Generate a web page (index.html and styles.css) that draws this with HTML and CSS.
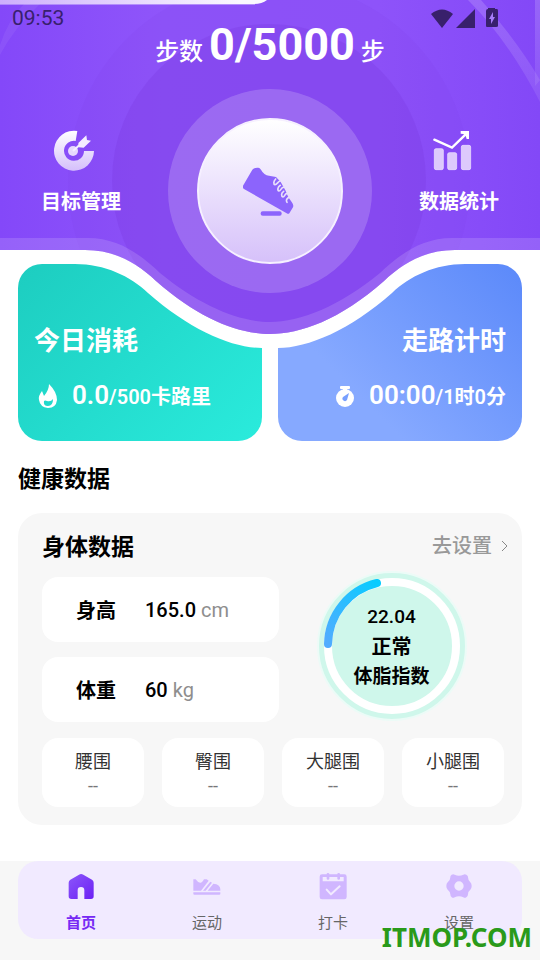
FILE: index.html
```html
<!DOCTYPE html>
<html lang="zh-CN">
<head>
<meta charset="utf-8">
<meta name="viewport" content="width=device-width, initial-scale=1">
<title>计步首页</title>
<link rel="stylesheet" href="styles.css">
</head>
<body>
<div class="app">
  <svg class="hero-art" viewBox="0 0 540 352" preserveAspectRatio="xMidYMin slice" aria-hidden="true">
    <defs>
      <linearGradient id="sky" x1="0" y1="0" x2="1" y2="0">
        <stop offset="0" stop-color="#8448f9"/><stop offset=".3" stop-color="#8f55fa"/>
        <stop offset=".7" stop-color="#8e53fa"/><stop offset="1" stop-color="#8348f7"/>
      </linearGradient>
      <linearGradient id="strip" x1="0" y1="0" x2="1" y2="0">
        <stop offset="0" stop-color="#ccaefc"/><stop offset=".9" stop-color="#fbf8ff"/>
      </linearGradient>
      <linearGradient id="ray" x1="0" y1="0" x2="0" y2="1">
        <stop offset="0" stop-color="#fff" stop-opacity=".16"/><stop offset="1" stop-color="#fff" stop-opacity=".08"/>
      </linearGradient>
      <clipPath id="body"><path d="M0 0H540V250H455C425 250 403 263 384 281C340 320 300 334 270 334S200 320 156 281C137 263 115 250 85 250H0Z"/></clipPath>
    </defs>
    <path fill="#fff" d="M0 240H540V264H465C435 264 410 276 392 293C350 330 308 348 278 348H262C232 348 190 330 148 293C130 276 105 264 75 264H0Z"/>
    <g clip-path="url(#body)">
      <rect width="540" height="340" fill="url(#sky)"/>
      <circle cx="269" cy="181" r="201" fill="#7d3fe8" fill-opacity=".14"/>
      <circle cx="269" cy="181" r="157" fill="#7c3de2" fill-opacity=".36"/>
      <path fill="url(#ray)" d="M468 0H481Q518 42 540 80V102Q508 40 468 0Z"/>
      <path fill="url(#ray)" d="M535 0H540V80L535 86Z"/>
      <path fill="#fff" fill-opacity=".06" d="M24 4H40Q14 28 0 55V45Q8 20 24 4Z"/>
      <path fill="#fff" fill-opacity=".14" d="M0 238H88C118 238 140 254 160 273C200 306 240 322 270 322S340 306 380 273C400 254 422 238 452 238H540V340H0Z"/>
    </g>
    <path fill="url(#strip)" d="M0 0H267Q262 4 254 4H0Z"/>
    <path fill="#fff" fill-opacity=".35" d="M0 4H255V5H0Z"/>
  </svg>

  <header class="hero">
    <div class="status">
      <time>09:53</time>
      <svg class="status-icons" viewBox="0 0 70 22" aria-hidden="true">
        <path d="M12 21L1 7Q12-2 23 7Z"/><path d="M26 21L45 2V21Z"/>
        <path d="M58 1H65V2H67Q68 2 68 4V19Q68 20 66 20H57Q56 20 56 19V4Q56 2 58 2Z"/>
        <path class="bolt" d="M63 5L59 12H61V17L65 10H63Z"/>
      </svg>
    </div>
    <h1 class="steps">步数 <b>0/5000</b> 步</h1>
    <div class="dial-row">
      <a class="shortcut" href="#goals">
        <svg viewBox="162 60 126 126" aria-hidden="true">
          <defs><linearGradient id="lilac" x1="0" y1="0" x2="0" y2="1"><stop offset="0" stop-color="#fff"/><stop offset="1" stop-color="#d5bffb"/></linearGradient></defs>
          <path fill="url(#lilac)" d="M235 63A60 60 0 1 0 285 123H255A30 30 0 1 1 230 93Z"/>
          <circle cx="222" cy="123" r="15" fill="#e6d8fd"/>
          <path d="M222 123L248 99" stroke="#f4edff" stroke-width="6"/>
          <path fill="#f4edff" d="M238 99L262 76L264 90L276 92L254 113L239 112Z"/>
        </svg>
        <span>目标管理</span>
      </a>
      <button class="dial" type="button" aria-label="开始步行">
        <svg viewBox="157 160 165 165" aria-hidden="true">
          <path fill="#8c64fc" d="M185 177Q190 170 203 171Q207 171 211 177Q220 194 235 195L256 199L270 214L284 239L293 260L303 274Q310 283 307 290L296 308Q293 311 288 308L160 235Q154 231 157 225Z"/>
          <path fill="none" stroke="#eae0fb" stroke-width="5" stroke-linecap="round" stroke-linejoin="round" d="M255 205C248 212 248 221 253 222C259 222 262 212 268 211M269 224C260 229 260 240 265 241C270 241 273 229 278 230M279 242C270 248 272 258 277 259C282 259 283 247 289 249M293 261L288 266Q286 271 289 275"/>
          <rect x="210" y="302" width="63" height="13" rx="6" fill="#8c64fc"/>
        </svg>
      </button>
      <a class="shortcut" href="#stats">
        <svg viewBox="480 60 126 126" aria-hidden="true">
          <g fill="#ddc9fc" stroke="#f1e8ff" stroke-width="2"><rect x="490" y="116" width="27" height="63" rx="5"/><rect x="530" y="128" width="27" height="51" rx="5"/><rect x="571" y="106" width="28" height="73" rx="5"/></g>
          <path fill="none" stroke="#fff" stroke-width="7" stroke-linecap="round" d="M490 89L543 113L584 73"/>
          <path fill="#fff" d="M569 63H594V87H587L584 77L577 72L569 71Z"/>
        </svg>
        <span>数据统计</span>
      </a>
    </div>
  </header>

  <main>
    <section class="cards">
      <a class="card burn" href="#burn">
        <h2>今日消耗</h2>
        <p>
          <svg viewBox="0 0 28 28" aria-hidden="true"><path fill="#fff" fill-rule="evenodd" d="M15 2Q23 10 23 18Q22 26 14 26Q6 25 5 18Q4 14 8 9L10 14Q15 8 15 2ZM10 19Q9 24 14 24Q19 24 19 17Q17 20 13 19Q11 18 10 19Z"/></svg>
          <span><b>0.0</b>/500卡路里</span>
        </p>
      </a>
      <a class="card timer" href="#timer">
        <h2>走路计时</h2>
        <p>
          <svg viewBox="0 0 28 28" aria-hidden="true"><rect x="9" y="4" width="10" height="3" rx="1" fill="#fff"/><path fill="#fff" d="M12 6H16V9H12Z"/><circle cx="14" cy="16" r="9" fill="#fff"/><path d="M18 11L16 18A2 2 0 0 1 12 15Z" fill="#779fff"/></svg>
          <span><b>00:00</b>/1时0分</span>
        </p>
      </a>
    </section>

    <h2 class="section-title">健康数据</h2>
    <section class="panel">
      <div class="panel-head">
        <h3>身体数据</h3>
        <a href="#body">去设置<svg viewBox="0 0 8 14" aria-hidden="true"><path d="M2 2L7 7L2 12"/></svg></a>
      </div>
      <div class="panel-body">
        <dl class="measures">
          <div><dt>身高</dt><dd>165.0 <small>cm</small></dd></div>
          <div><dt>体重</dt><dd>60 <small>kg</small></dd></div>
        </dl>
        <div class="gauge">
          <svg viewBox="0 0 150 150" aria-hidden="true">
            <defs><linearGradient id="arc" x1="0" y1="1" x2="1" y2="0"><stop offset="0" stop-color="#51acff"/><stop offset="1" stop-color="#08ccff"/></linearGradient></defs>
            <circle cx="75" cy="75" r="74" fill="#cff7eb" stroke="#ecfbf7" stroke-width="2"/>
            <circle cx="75" cy="75" r="64" fill="none" stroke="#fff" stroke-width="8"/>
            <path d="M11 73A64 64 0 0 1 60 12" fill="none" stroke="url(#arc)" stroke-width="8" stroke-linecap="round"/>
          </svg>
          <p><span>22.04</span><strong>正常</strong><span class="gauge-label">体脂指数</span></p>
        </div>
      </div>
      <div class="tiles">
        <button type="button">腰围<span>--</span></button>
        <button type="button">臀围<span>--</span></button>
        <button type="button">大腿围<span>--</span></button>
        <button type="button">小腿围<span>--</span></button>
      </div>
    </section>
  </main>

  <footer class="footer">
    <nav class="tabs">
      <a class="active" href="#home" aria-current="page">
        <svg viewBox="199 92 90 90" aria-hidden="true"><defs><linearGradient id="home" x1="0" y1="0" x2="1" y2="1"><stop offset="0" stop-color="#8c57fa"/><stop offset="1" stop-color="#6c20f4"/></linearGradient></defs><path fill="url(#home)" d="M238 103Q244 99 251 103L277 118Q282 121 282 127V168Q282 176 274 176H254V150Q254 140 244 140T234 150V176H215Q207 176 207 168V127Q207 121 212 118Z"/></svg>
        首页
      </a>
      <a href="#sport">
        <svg viewBox="578 92 90 90" aria-hidden="true"><path d="M582 117H589Q597 129 605 127Q611 124 614 117H622L628 121L605 151H582ZM633 124L638 127L619 151H611ZM642 130Q663 132 663 147V151H625ZM582 156H663V160Q663 163 660 163H585Q582 163 582 160Z"/></svg>
        运动
      </a>
      <a href="#checkin">
        <svg viewBox="145 92 90 90" aria-hidden="true"><path fill-rule="evenodd" d="M157 102H171V101Q171 98 175 98T179 101V102H203V101Q203 98 207 98T211 101V102H224Q231 102 231 109V170Q231 177 224 177H157Q150 177 150 170V109Q150 102 157 102ZM159 110V123H222V110H211V115Q211 118 207 118T203 115V110H179V115Q179 118 175 118T171 115V110Z"/><path fill="none" stroke="#f1eaff" stroke-width="6" stroke-linecap="round" stroke-linejoin="round" d="M171 148L184 162L210 138"/></svg>
        打卡
      </a>
      <a href="#settings">
        <svg viewBox="523 92 90 90" aria-hidden="true"><path fill-rule="evenodd" d="M546 103Q551 100 555 103Q568 109 581 103Q585 100 590 103Q596 106 595 111Q595 120 602 126Q606 129 606 137T602 148Q595 153 595 162Q595 168 590 171Q585 174 581 171Q568 164 555 171Q551 174 546 171Q542 168 542 162Q541 153 534 148Q530 145 530 137T534 126Q542 120 542 111Q541 106 546 103ZM568 123A14 14 0 1 0 568 151A14 14 0 1 0 568 123Z"/></svg>
        设置
      </a>
    </nav>
    <span class="watermark">ITMOP.COM</span>
  </footer>
</div>
</body>
</html>
```
FILE: styles.css
```css
* { box-sizing: border-box; }
body, h1, h2, h3, p, dl, dd { margin: 0; }
body {
  background: #fff;
  color: #000;
  font-family: Roboto, "Noto Sans CJK SC", sans-serif;
}
a { color: inherit; text-decoration: none; }
button { font: inherit; border: 0; padding: 0; }

.app {
  position: relative;
  display: flex;
  flex-direction: column;
  min-height: 100vh;
}

/* Purple backdrop; its white rim overlaps the tops of the cards */
.hero-art {
  position: absolute;
  z-index: 1;
  top: 0;
  left: 0;
  width: 100%;
  height: 352px;
  pointer-events: none;
}

.hero {
  position: relative;
  z-index: 2;
  color: #fff;
}
.status {
  display: flex;
  justify-content: space-between;
  align-items: center;
  height: 28px;
  padding: 8px 40px 0 12px;
  font-size: 21px;
  line-height: 20px;
  color: #38206c;
}
.status-icons { width: 70px; height: 22px; fill: #38206c; }
.status-icons .bolt { fill: #a67df8; }

.steps {
  height: 90px;
  font-size: 24px;
  font-weight: 500;
  line-height: 34px;
  text-align: center;
}
.steps b { font-size: 45px; font-weight: 700; }

.dial-row {
  display: flex;
  justify-content: space-between;
  align-items: flex-start;
  padding: 0 41px;
}
.shortcut {
  display: flex;
  flex-direction: column;
  align-items: center;
  gap: 18px;
  padding-top: 12px;
  font-size: 20px;
  font-weight: 700;
  line-height: 24px;
}
.shortcut svg { width: 42px; height: 42px; margin-right: 14px; }
.dial {
  display: grid;
  place-items: center;
  width: 146px;
  height: 146px;
  border: 2px solid #f6f0ff;
  border-radius: 50%;
  background: linear-gradient(#fff, #d6c1fa);
  box-shadow: 0 0 0 29px rgba(255, 255, 255, .18);
}
.dial svg { width: 55px; height: 55px; }

main { padding: 0 18px; }
.cards { display: grid; grid-template-columns: 1fr 1fr; gap: 16px; }
.card {
  height: 177px;
  padding: 61px 16px 0;
  border-radius: 24px;
  color: #fff;
}
.burn { background: linear-gradient(135deg, #1dcdc0, #2aebdc); }
.timer { background: linear-gradient(45deg, #86a9ff 30%, #5b89fa); text-align: right; }
.card h2 { font-size: 26px; line-height: 32px; }
.card p {
  display: flex;
  align-items: center;
  gap: 10px;
  margin-top: 22px;
  font-size: 20px;
  font-weight: 600;
  line-height: 32px;
}
.timer p { justify-content: flex-end; }
.card svg { width: 28px; height: 28px; }
.card b { font-size: 26px; font-weight: 600; }

.section-title { margin: 23px 0 17px; font-size: 23px; line-height: 32px; }
.panel {
  padding: 19px 18px 18px 24px;
  border-radius: 24px;
  background: #f7f7f7;
}
.panel-head {
  display: flex;
  justify-content: space-between;
  align-items: flex-start;
  line-height: 32px;
}
.panel-head h3 { font-size: 23px; }
.panel-head a {
  display: flex;
  align-items: center;
  gap: 8px;
  margin-right: -4px;
  color: #999;
  font-size: 20px;
  font-weight: 500;
  line-height: 28px;
}
.panel-head svg { width: 8px; height: 14px; fill: none; stroke: #888; stroke-width: 1; }
.panel-body {
  display: grid;
  grid-template-columns: 237fr 225fr;
  margin-top: 13px;
}
.measures { display: grid; gap: 15px; }
.measures div {
  display: flex;
  align-items: center;
  gap: 29px;
  height: 65px;
  padding-left: 34px;
  border-radius: 16px;
  background: #fff;
  font-size: 20px;
  font-weight: 700;
}
.measures dd { font-weight: 500; }
.measures small { font-size: 20px; font-weight: 400; color: #8e8e8e; }
.gauge {
  display: grid;
  place-items: center;
  align-self: start;
  margin-top: -6px;
}
.gauge svg, .gauge p { grid-area: 1 / 1; }
.gauge svg { width: 150px; height: 150px; }
.gauge p {
  display: grid;
  justify-items: center;
  padding-top: 2px;
  font-size: 19px;
  font-weight: 500;
  line-height: 30px;
}
.gauge strong { font-size: 20px; }
.gauge .gauge-label { font-weight: 700; }

.tiles { display: grid; grid-template-columns: repeat(4, 1fr); gap: 18px; margin-top: 16px; }
.tiles button {
  height: 69px;
  padding-top: 2px;
  border-radius: 16px;
  background: #fff;
  color: #333;
  font-size: 18px;
  line-height: 24px;
}
.tiles span { display: block; color: #777; }

.footer {
  position: relative;
  margin-top: auto;
  padding: 0 18px 21px;
  background: #f7f7f7;
}
.tabs {
  display: grid;
  grid-template-columns: repeat(4, 1fr);
  height: 78px;
  border-radius: 20px;
  background: #f1eaff;
}
.tabs a {
  display: flex;
  flex-direction: column;
  align-items: center;
  gap: 12px;
  padding-top: 10px;
  color: #666;
  font-size: 15px;
  line-height: 20px;
}
.tabs svg { width: 30px; height: 30px; fill: #d0b6ff; }
.tabs .active { color: #7629f4; font-weight: 700; }
.watermark {
  position: absolute;
  right: 8px;
  bottom: 6px;
  color: #2a9a1a;
  font: 700 26px/34px "Noto Sans", sans-serif;
}
```
